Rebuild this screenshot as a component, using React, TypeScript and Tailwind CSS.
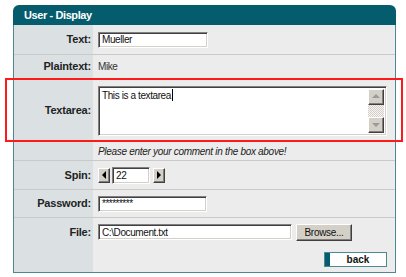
import React from "react";

const inset =
  "bg-white border border-t-[#808080] border-l-[#808080] border-r-white border-b-white shadow-[inset_1px_1px_0_#404040,inset_-1px_-1px_0_#d4d0c8]";
const raised =
  "bg-[#d4d0c8] border border-t-white border-l-white border-r-[#404040] border-b-[#404040] shadow-[inset_-1px_-1px_0_#808080]";

function Row({
  label,
  children,
  h,
  line = true,
}: {
  label?: string;
  children: React.ReactNode;
  h: string;
  line?: boolean;
}) {
  return (
    <div className={`grid grid-cols-[79px_1fr] ${h} ${line ? "border-b border-[#c9c9c9]" : ""}`}>
      <div className="bg-[#dbe1e3] flex items-center justify-end pr-[2px] text-[11px] font-bold text-[#222] tracking-[-0.2px]">
        {label}
      </div>
      <div className="flex items-center pl-[5px]">{children}</div>
    </div>
  );
}

function Tri({ dir, color }: { dir: "l" | "r" | "u" | "d"; color: string }) {
  const pts = {
    l: "5,1 5,9 1,5",
    r: "1,1 1,9 5,5",
    u: "1,6 9,6 5,2",
    d: "1,3 9,3 5,7",
  }[dir];
  const w = dir === "l" || dir === "r" ? 6 : 10;
  const hh = dir === "l" || dir === "r" ? 10 : 9;
  return (
    <svg width={w} height={hh} viewBox={`0 0 ${w} ${hh}`}>
      <polygon points={pts} fill={color} />
    </svg>
  );
}

export default function App() {
  return (
    <div className="w-[406px] h-[277px] bg-white pt-[5px] pl-[13px] font-['Liberation_Sans',Arial,sans-serif] text-[#111]">
      <div className="relative w-[383px]">
        <div className="h-[20px] bg-[#055c6c] rounded-t-[6px] flex items-center pl-[11px] text-white text-[11px] font-bold tracking-[-0.4px]">
          User - Display
        </div>
        <div className="border-x border-b border-[#4f8895] bg-[#ececec]">
          <Row label="Text:" h="h-[30px]">
            <div className={`${inset} w-[110px] h-[16px] flex items-center pl-[3px] text-[10px] tracking-[-0.4px]`}>
              Mueller
            </div>
          </Row>
          <Row label="Plaintext:" h="h-[24px]">
            <span className="text-[10px] tracking-[-0.4px] text-[#333]">Mike</span>
          </Row>
          <Row label="Textarea:" h="h-[63px]" line={false}>
            <div className={`${inset} w-[289px] h-[50px] flex`}>
              <div className="flex-1 pl-[3px] pt-[2px] text-[10px] tracking-[-0.4px] leading-[13px] flex items-start">
                This is a textarea<span className="inline-block w-px h-[12px] bg-black ml-[1px]" />
              </div>
              <div className="w-[16px] flex flex-col my-[2px] mr-[2px] bg-[repeating-conic-gradient(#d4d0c8_0_25%,#f4f4f4_0_50%)] bg-[length:2px_2px]">
                <div className={`${raised} h-[16px] flex items-center justify-center`}>
                  <Tri dir="u" color="#9a9a9a" />
                </div>
                <div className="flex-1" />
                <div className={`${raised} h-[16px] flex items-center justify-center`}>
                  <Tri dir="d" color="#9a9a9a" />
                </div>
              </div>
            </div>
          </Row>
          <Row h="h-[19px]">
            <span className="text-[10px] italic text-[#222] tracking-[-0.3px]">Please enter your comment in the box above!</span>
          </Row>
          <Row label="Spin:" h="h-[29px]">
            <div className="flex items-center">
              <div className={`${raised} w-[12px] h-[15px] flex items-center justify-center`}>
                <Tri dir="l" color="#000" />
              </div>
              <div className={`${inset} ml-[2px] w-[38px] h-[17px] flex items-center pl-[3px] text-[10px] tracking-[-0.4px]`}>22</div>
              <div className={`${raised} ml-[3px] w-[12px] h-[15px] flex items-center justify-center`}>
                <Tri dir="r" color="#000" />
              </div>
            </div>
          </Row>
          <Row label="Password:" h="h-[28px]">
            <div className={`${inset} w-[109px] h-[16px] flex items-center pl-[3px] text-[10px] tracking-[-0.5px]`}>
              *********
            </div>
          </Row>
          <Row label="File:" h="h-[28px]" line={false}>
            <div className="flex items-center">
              <div className={`${inset} w-[194px] h-[16px] flex items-center pl-[3px] text-[10px] tracking-[-0.4px]`}>
                C:\Document.txt
              </div>
              <div className={`${raised} ml-[4px] w-[56px] h-[17px] flex items-center justify-center text-[10px] tracking-[-0.3px]`}>
                Browse...
              </div>
            </div>
          </Row>
          <div className="grid grid-cols-[79px_1fr] h-[26px]">
            <div className="bg-[#dbe1e3]" />
            <div className="flex justify-end pr-[8px] pt-[6px]">
              <div className="w-[63px] h-[15px] border border-[#4f8895] bg-white flex">
                <div className="w-[5px] bg-[#055c6c]" />
                <div className="flex-1 flex items-center justify-center text-[10px] font-bold">back</div>
              </div>
            </div>
          </div>
        </div>
        <div className="absolute left-[-8px] top-[73px] w-[398px] h-[64px] border-2 border-[#ff1a1a] pointer-events-none" />
      </div>
    </div>
  );
}
